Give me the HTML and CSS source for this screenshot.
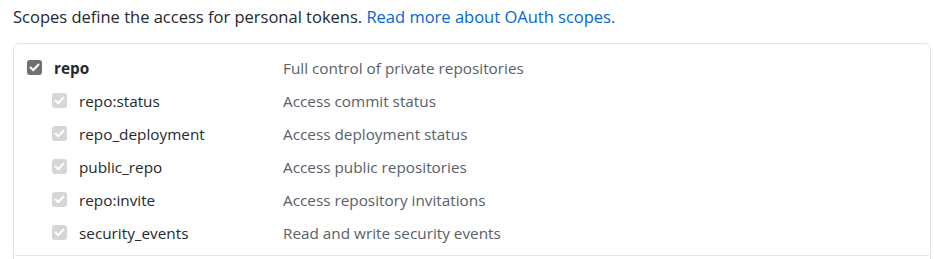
FILE: index.html
```html
<!DOCTYPE html>
<html lang="en">
<head>
  <meta charset="UTF-8">
  <title>Token scopes</title>
  <link rel="stylesheet" href="styles.css">
</head>
<body>
  <div class="page">
    <p class="intro">Scopes define the access for personal tokens. <a href="#">Read more about OAuth scopes.</a></p>

    <div class="scopes">
      <div class="scope-group">
        <div class="scope-row top">
          <label class="scope-name">
            <span class="box dark"><svg viewBox="0 0 15 15" width="15" height="15"><path d="M3.6 7.6 L6.2 10.2 L11.4 4.6" fill="none" stroke="#fff" stroke-width="2.1" stroke-linecap="round" stroke-linejoin="round"/></svg></span>
            <b>repo</b>
          </label>
          <span class="scope-desc">Full control of private repositories</span>
        </div>
        <div class="scope-row sub">
          <label class="scope-name">
            <span class="box"><svg viewBox="0 0 15 15" width="15" height="15"><path d="M3.6 7.6 L6.2 10.2 L11.4 4.6" fill="none" stroke="#fff" stroke-width="2.1" stroke-linecap="round" stroke-linejoin="round"/></svg></span>
            repo:status
          </label>
          <span class="scope-desc">Access commit status</span>
        </div>
        <div class="scope-row sub">
          <label class="scope-name">
            <span class="box"><svg viewBox="0 0 15 15" width="15" height="15"><path d="M3.6 7.6 L6.2 10.2 L11.4 4.6" fill="none" stroke="#fff" stroke-width="2.1" stroke-linecap="round" stroke-linejoin="round"/></svg></span>
            repo_deployment
          </label>
          <span class="scope-desc">Access deployment status</span>
        </div>
        <div class="scope-row sub">
          <label class="scope-name">
            <span class="box"><svg viewBox="0 0 15 15" width="15" height="15"><path d="M3.6 7.6 L6.2 10.2 L11.4 4.6" fill="none" stroke="#fff" stroke-width="2.1" stroke-linecap="round" stroke-linejoin="round"/></svg></span>
            public_repo
          </label>
          <span class="scope-desc">Access public repositories</span>
        </div>
        <div class="scope-row sub">
          <label class="scope-name">
            <span class="box"><svg viewBox="0 0 15 15" width="15" height="15"><path d="M3.6 7.6 L6.2 10.2 L11.4 4.6" fill="none" stroke="#fff" stroke-width="2.1" stroke-linecap="round" stroke-linejoin="round"/></svg></span>
            repo:invite
          </label>
          <span class="scope-desc">Access repository invitations</span>
        </div>
        <div class="scope-row sub">
          <label class="scope-name">
            <span class="box"><svg viewBox="0 0 15 15" width="15" height="15"><path d="M3.6 7.6 L6.2 10.2 L11.4 4.6" fill="none" stroke="#fff" stroke-width="2.1" stroke-linecap="round" stroke-linejoin="round"/></svg></span>
            security_events
          </label>
          <span class="scope-desc">Read and write security events</span>
        </div>
      </div>
    </div>
  </div>
</body>
</html>
```

FILE: styles.css
```css
body {
  margin: 0;
  font-family: "Open Sans", "Noto Sans", sans-serif;
  color: #24292e;
  background: #fff;
}
.page {
  padding: 6px 3px 0 13px;
}
.intro {
  margin: 0 0 15px;
  font-size: 16.5px;
  line-height: 22px;
}
.intro a {
  color: #0366d6;
  text-decoration: none;
}
.scopes {
  border: 1px solid #e1e4e8;
  border-radius: 6px;
  height: 400px;
}
.scope-group {
  margin: 0 1px;
  padding: 7px 0 6px;
  border-bottom: 1px solid #e1e4e8;
}
.scope-row {
  display: flex;
  align-items: center;
  height: 33px;
  font-size: 15.3px;
}
.scope-name {
  display: flex;
  align-items: center;
  gap: 12px;
  width: 256px;
  padding-left: 12px;
  flex-shrink: 0;
}
.scope-row.sub .scope-name {
  width: 231px;
  padding-left: 37px;
}
.scope-name b {
  font-weight: 700;
}
.scope-desc {
  color: #586069;
}
.box {
  display: block;
  width: 15px;
  height: 15px;
  border-radius: 3px;
  background: #d6d6d6;
}
.box svg {
  display: block;
}
.box.dark {
  background: #707070;
}
```
